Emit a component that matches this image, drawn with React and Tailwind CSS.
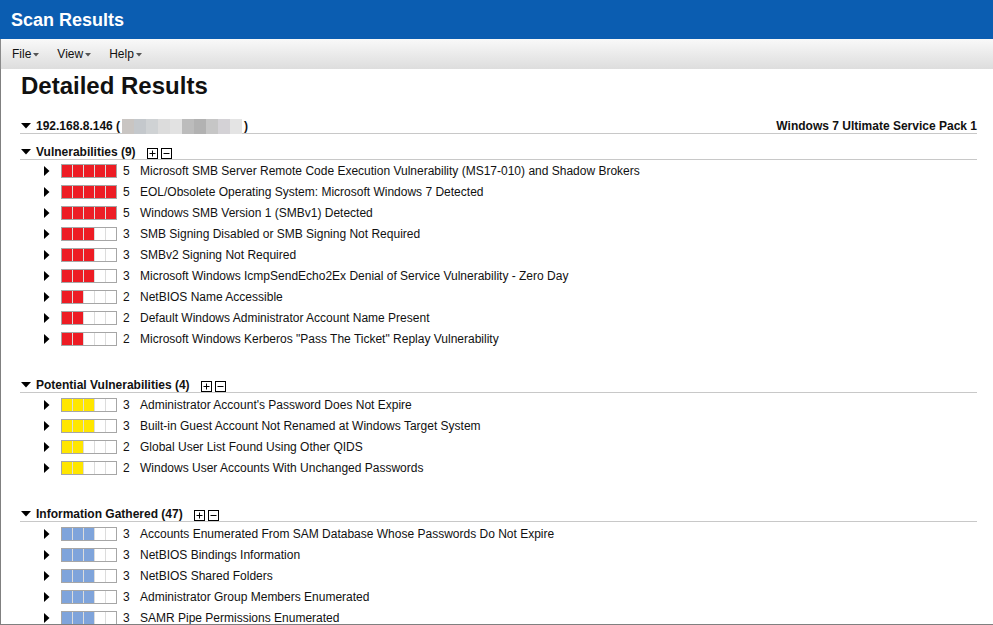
import React from 'react';

const FONT = { fontFamily: '"Liberation Sans", Arial, sans-serif' };

const sections = [
  {
    title: 'Vulnerabilities (9)',
    fill: 'bg-[#ed1c24]',
    items: [
      [5, 'Microsoft SMB Server Remote Code Execution Vulnerability (MS17-010) and Shadow Brokers'],
      [5, 'EOL/Obsolete Operating System: Microsoft Windows 7 Detected'],
      [5, 'Windows SMB Version 1 (SMBv1) Detected'],
      [3, 'SMB Signing Disabled or SMB Signing Not Required'],
      [3, 'SMBv2 Signing Not Required'],
      [3, 'Microsoft Windows IcmpSendEcho2Ex Denial of Service Vulnerability - Zero Day'],
      [2, 'NetBIOS Name Accessible'],
      [2, 'Default Windows Administrator Account Name Present'],
      [2, 'Microsoft Windows Kerberos "Pass The Ticket" Replay Vulnerability'],
    ],
  },
  {
    title: 'Potential Vulnerabilities (4)',
    fill: 'bg-[#ffe600]',
    items: [
      [3, "Administrator Account's Password Does Not Expire"],
      [3, 'Built-in Guest Account Not Renamed at Windows Target System'],
      [2, 'Global User List Found Using Other QIDS'],
      [2, 'Windows User Accounts With Unchanged Passwords'],
    ],
  },
  {
    title: 'Information Gathered (47)',
    fill: 'bg-[#7fa4db]',
    items: [
      [3, 'Accounts Enumerated From SAM Database Whose Passwords Do Not Expire'],
      [3, 'NetBIOS Bindings Information'],
      [3, 'NetBIOS Shared Folders'],
      [3, 'Administrator Group Members Enumerated'],
      [3, 'SAMR Pipe Permissions Enumerated'],
    ],
  },
];

const blur = ['#c9c5c2', '#c4c8cc', '#cfd2d4', '#dcdcdc', '#e2e2e2', '#bcbcbc', '#b2b2b2', '#c6c6c6', '#d4d2d6', '#e4e4e4'];

function DownTri() {
  return (
    <svg width="10" height="6" viewBox="0 0 10 6" className="shrink-0">
      <path d="M0 0 L10 0 L5 5.5 Z" fill="#000" />
    </svg>
  );
}

function RightTri() {
  return (
    <svg width="6" height="10" viewBox="0 0 6 10" className="shrink-0">
      <path d="M0 0 L5.5 5 L0 10 Z" fill="#000" />
    </svg>
  );
}

function Caret() {
  return (
    <svg width="6" height="4" viewBox="0 0 6 4" className="ml-[2px] mt-[2px]">
      <path d="M0 0 L6 0 L3 3.5 Z" fill="#555" />
    </svg>
  );
}

function Bar({ level, fill }) {
  return (
    <div className="flex border border-[#a6a6a6] bg-white w-[56px] h-[14px] shrink-0">
      {[0, 1, 2, 3, 4].map(i => (
        <div
          key={i}
          className={`h-full ${i < level ? fill : 'bg-white'} ${i > 0 ? 'border-l border-[#dcdcdc] w-[11px]' : 'w-[10px]'}`}
        />
      ))}
    </div>
  );
}

function Section({ s, first }) {
  return (
    <div className={first ? 'mt-[11px]' : 'mt-[29px]'}>
      <div className="flex items-center h-[15px] border-b border-[#c8c8c8] ml-[19px] w-[957px]">
        <div className="w-[16px] flex justify-start pl-px"><DownTri /></div>
        <span className="font-bold text-[12px] leading-none text-[#111]">{s.title}</span>
        <div className="flex gap-[3px] ml-[11px] mt-[2px]">
          <svg width="11" height="11" viewBox="0 0 11 11"><rect x="0.5" y="0.5" width="10" height="10" fill="#fff" stroke="#000" /><path d="M2.5 5.5H8.5M5.5 2.5V8.5" stroke="#000" /></svg>
          <svg width="11" height="11" viewBox="0 0 11 11"><rect x="0.5" y="0.5" width="10" height="10" fill="#fff" stroke="#000" /><path d="M2.5 5.5H8.5" stroke="#000" /></svg>
        </div>
      </div>
      <div className={first ? '' : 'mt-px'}>
        {s.items.map(([lvl, text], i) => (
          <div key={i} className="flex items-center h-[21px] pl-[43px] text-[12px] text-[#111]">
            <RightTri />
            <div className="ml-[11px]"><Bar level={lvl} fill={s.fill} /></div>
            <span className="w-[23px] pl-[6px] shrink-0">{lvl}</span>
            <span>{text}</span>
          </div>
        ))}
      </div>
    </div>
  );
}

export default function App() {
  return (
    <div className="w-[993px] h-[625px] overflow-hidden bg-white flex flex-col" style={FONT}>
      <div className="h-[39px] bg-[#0b5db1] flex items-center pl-[11px] shrink-0">
        <span className="text-white font-bold text-[18px] leading-none">Scan Results</span>
      </div>
      <div className="h-[30px] bg-linear-to-b from-[#f9f9f9] to-[#dddddd] flex items-center text-[12px] text-[#111] shrink-0 border-l border-[#8a8a8a]">
        <div className="flex items-center ml-[11px]">File<Caret /></div>
        <div className="flex items-center ml-[18px]">View<Caret /></div>
        <div className="flex items-center ml-[18px]">Help<Caret /></div>
      </div>
      <div className="flex-1 border-l border-b border-[#808080] overflow-hidden">
        <h1 className="text-[24px] font-bold leading-[28px] ml-[20px] mt-[3px] text-[#111]">Detailed Results</h1>
        <div className="flex items-center h-[15px] border-b border-[#c8c8c8] ml-[19px] w-[957px] mt-[19px]">
          <div className="w-[16px] flex pl-px"><DownTri /></div>
          <span className="font-bold text-[12px] leading-none text-[#111]">192.168.8.146 (</span>
          <div className="flex h-[15px] mx-[2px] mt-[1px]">
            {blur.map((c, i) => (
              <div key={i} className="w-[12px] h-full" style={{ background: c }} />
            ))}
          </div>
          <span className="font-bold text-[12px] leading-none text-[#111]">)</span>
          <span className="ml-auto font-bold text-[12px] leading-none text-[#111]">Windows 7 Ultimate Service Pack 1</span>
        </div>
        {sections.map((s, i) => (
          <Section key={i} s={s} first={i === 0} />
        ))}
      </div>
    </div>
  );
}
